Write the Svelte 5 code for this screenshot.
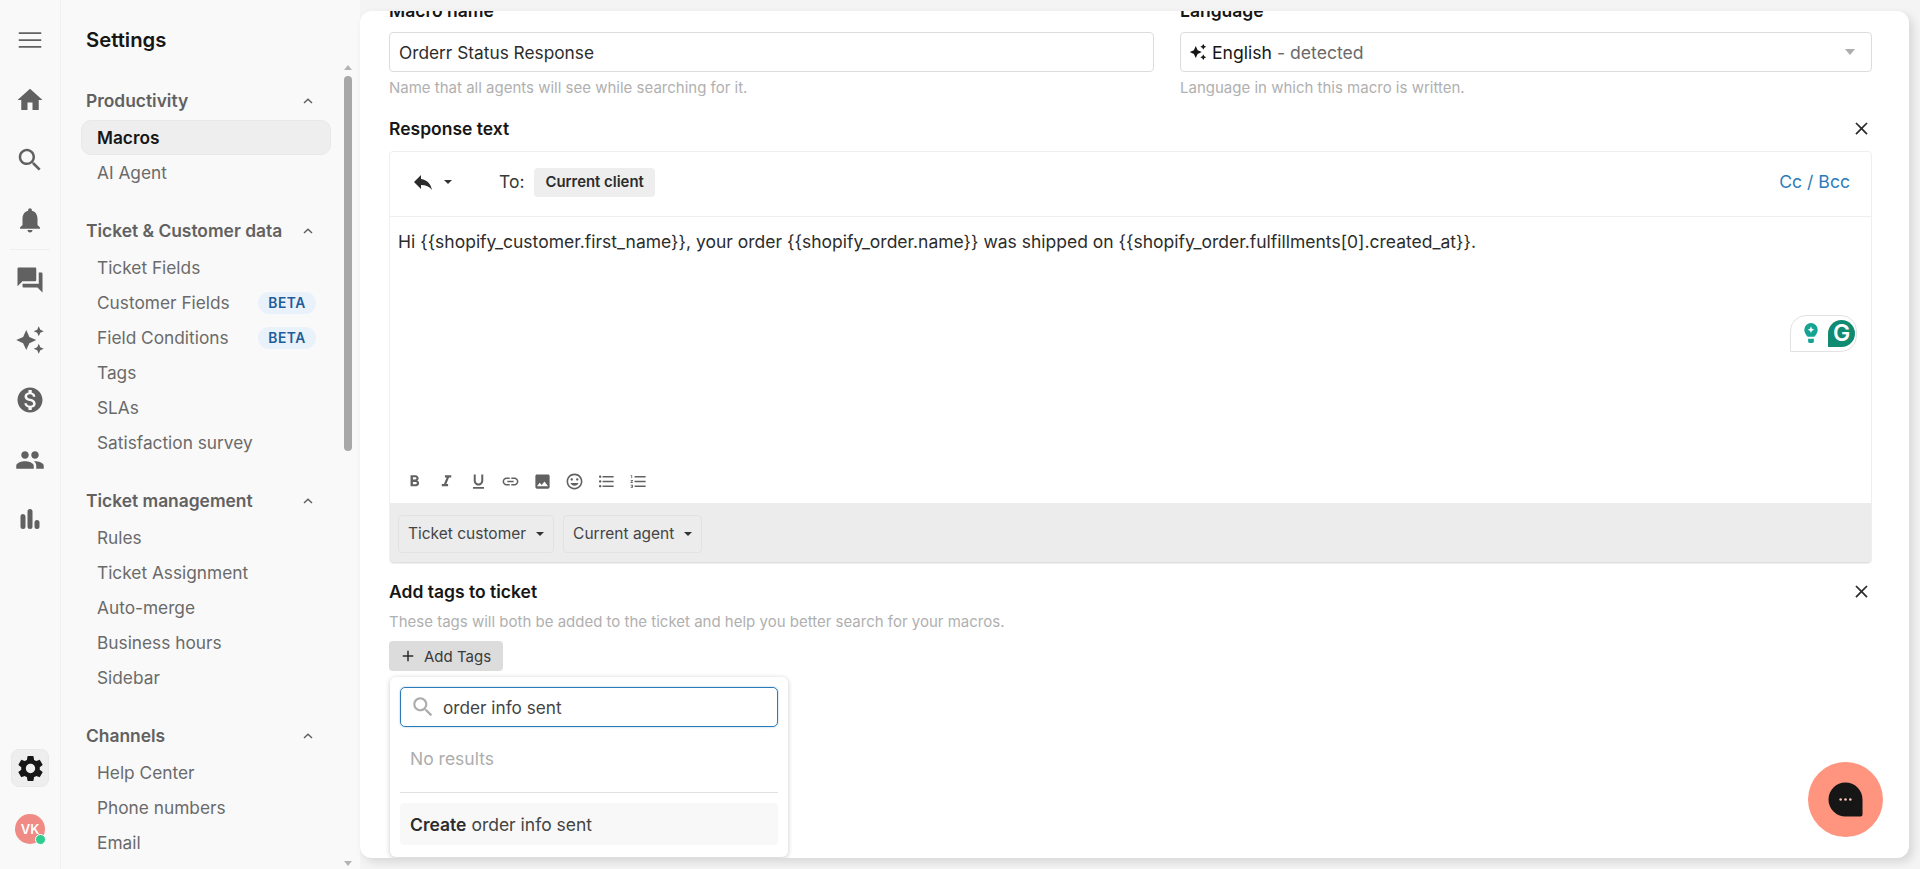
<script>
  const icons = {
    menu: 'M3 18.2h18v-1.4H3zm0-5.5h18v-1.4H3zM3 5.8v1.4h18V5.8z',
    home: 'M10 20v-6h4v6h5v-8h3L12 3 2 12h3v8z',
    search: 'M15.5 14h-.79l-.28-.27C15.41 12.59 16 11.11 16 9.5 16 5.91 13.09 3 9.5 3S3 5.91 3 9.5 5.91 16 9.5 16c1.61 0 3.09-.59 4.23-1.57l.27.28v.79l5 4.99L20.49 19l-4.99-5zm-6 0C7.01 14 5 11.99 5 9.5S7.01 5 9.5 5 14 7.01 14 9.5 11.99 14 9.5 14z',
    bell: 'M12 22c1.1 0 2-.9 2-2h-4c0 1.1.89 2 2 2zm6-6v-5c0-3.07-1.64-5.64-4.5-6.32V4c0-.83-.67-1.5-1.5-1.5s-1.5.67-1.5 1.5v.68C7.63 5.36 6 7.92 6 11v5l-2 2v1h16v-1l-2-2z',
    forum: 'M21 6h-2v9H6v2c0 .55.45 1 1 1h11l4 4V7c0-.55-.45-1-1-1zm-4 6V3c0-.55-.45-1-1-1H3c-.55 0-1 .45-1 1v14l4-4h10c.55 0 1-.45 1-1z',
    sparkle: 'M19 9l1.25-2.75L23 5l-2.75-1.25L19 1l-1.25 2.75L15 5l2.75 1.25L19 9zm-7.5.5L9 4 6.5 9.5 1 12l5.5 2.5L9 20l2.5-5.5L17 12l-5.5-2.5zM19 15l-1.25 2.75L15 19l2.75 1.25L19 23l1.25-2.75L23 19l-2.75-1.25L19 15z',
    money: 'M12 2C6.48 2 2 6.48 2 12s4.48 10 10 10 10-4.48 10-10S17.52 2 12 2zm1.41 16.09V20h-2.67v-1.93c-1.71-.36-3.16-1.46-3.27-3.4h1.96c.1 1.05.82 1.87 2.65 1.87 1.96 0 2.4-.98 2.4-1.59 0-.83-.44-1.61-2.67-2.14-2.48-.6-4.18-1.62-4.18-3.67 0-1.72 1.39-2.84 3.11-3.21V4h2.67v1.95c1.86.45 2.79 1.86 2.85 3.39H14.3c-.05-1.11-.64-1.87-2.22-1.87-1.5 0-2.4.68-2.4 1.64 0 .84.65 1.39 2.67 1.91s4.18 1.39 4.18 3.91c-.01 1.83-1.38 2.83-3.12 3.16z',
    people: 'M16 11c1.66 0 2.99-1.34 2.99-3S17.66 5 16 5c-1.66 0-3 1.34-3 3s1.34 3 3 3zm-8 0c1.66 0 2.99-1.34 2.99-3S9.66 5 8 5C6.34 5 5 6.34 5 8s1.34 3 3 3zm0 2c-2.33 0-7 1.17-7 3.5V19h14v-2.5c0-2.33-4.67-3.5-7-3.5zm8 0c-.29 0-.62.02-.97.05 1.16.84 1.97 1.97 1.97 3.45V19h6v-2.5c0-2.33-4.67-3.5-7-3.5z',
    chart: 'M4.400 9.200a2 2 0 0 1 4 0v8a2 2 0 0 1-4 0zM10 5.200a2 2 0 0 1 4 0v12a2 2 0 0 1-4 0zM15.600 14a2 2 0 0 1 4 0v3.200a2 2 0 0 1-4 0z',
    gear: 'M19.14 12.94c.04-.3.06-.61.06-.94 0-.32-.02-.64-.07-.94l2.03-1.58c.18-.14.23-.41.12-.61l-1.92-3.32c-.12-.22-.37-.29-.59-.22l-2.39.96c-.5-.38-1.03-.7-1.62-.94l-.36-2.54c-.04-.24-.24-.41-.48-.41h-3.84c-.24 0-.43.17-.47.41l-.36 2.54c-.59.24-1.13.57-1.62.94l-2.39-.96c-.22-.08-.47 0-.59.22L2.74 8.87c-.12.21-.08.47.12.61l2.03 1.58c-.05.3-.09.63-.09.94s.02.64.07.94l-2.03 1.58c-.18.14-.23.41-.12.61l1.92 3.32c.12.22.37.29.59.22l2.39-.96c.5.38 1.03.7 1.62.94l.36 2.54c.05.24.24.41.48.41h3.84c.24 0 .44-.17.47-.41l.36-2.54c.59-.24 1.13-.56 1.62-.94l2.39.96c.22.08.47 0 .59-.22l1.92-3.32c.12-.22.07-.47-.12-.61l-2.01-1.58zM12 15.6c-1.98 0-3.6-1.62-3.6-3.6s1.62-3.6 3.6-3.6 3.6 1.62 3.6 3.6-1.62 3.6-3.6 3.6z',
    reply: 'M10 9V5l-7 7 7 7v-4.1c5 0 8.5 1.6 11 5.1-1-5-4-10-11-11z',
    bold: 'M15.6 10.79c.97-.67 1.65-1.77 1.65-2.79 0-2.26-1.75-4-4-4H7v14h7.04c2.09 0 3.71-1.7 3.71-3.79 0-1.52-.86-2.82-2.15-3.42zM10 6.5h3c.83 0 1.5.67 1.5 1.5s-.67 1.5-1.5 1.5h-3v-3zm3.5 9H10v-3h3.5c.83 0 1.5.67 1.5 1.5s-.67 1.5-1.5 1.5z',
    italic: 'M10 4v3h2.21l-3.42 8H6v3h8v-3h-2.21l3.42-8H18V4z',
    underline: 'M12 17c3.31 0 6-2.69 6-6V3h-2.5v8c0 1.93-1.57 3.5-3.5 3.5S8.5 12.93 8.5 11V3H6v8c0 3.31 2.69 6 6 6zm-7 2v2h14v-2H5z',
    link: 'M3.9 12c0-1.71 1.39-3.1 3.1-3.1h4V7H7c-2.76 0-5 2.24-5 5s2.24 5 5 5h4v-1.9H7c-1.71 0-3.1-1.39-3.1-3.1zM8 13h8v-2H8v2zm9-6h-4v1.9h4c1.71 0 3.1 1.39 3.1 3.1s-1.39 3.1-3.1 3.1h-4V17h4c2.76 0 5-2.24 5-5s-2.24-5-5-5z',
    image: 'M21 19V5c0-1.1-.9-2-2-2H5c-1.1 0-2 .9-2 2v14c0 1.1.9 2 2 2h14c1.1 0 2-.9 2-2zM8.5 13.5l2.5 3.01L14.5 12l4.5 6H5l3.5-4.5z',
    emoji: 'M11.99 2C6.47 2 2 6.48 2 12s4.47 10 9.99 10C17.52 22 22 17.52 22 12S17.52 2 11.99 2zM12 20c-4.42 0-8-3.58-8-8s3.58-8 8-8 8 3.58 8 8-3.58 8-8 8zm3.5-9c.83 0 1.5-.67 1.5-1.5S16.33 8 15.5 8 14 8.67 14 9.5s.67 1.5 1.5 1.5zm-7 0c.83 0 1.5-.67 1.5-1.5S9.33 8 8.5 8 7 8.67 7 9.5 7.67 11 8.5 11zm3.5 6.5c2.33 0 4.31-1.46 5.11-3.5H6.89c.8 2.04 2.78 3.5 5.11 3.5z',
    bullets: 'M4 10.5c-.83 0-1.5.67-1.5 1.5s.67 1.5 1.5 1.5 1.5-.67 1.5-1.5-.67-1.5-1.5-1.5zm0-6c-.83 0-1.5.67-1.5 1.5S3.17 7.5 4 7.5 5.5 6.83 5.5 6 4.83 4.5 4 4.5zm0 12c-.83 0-1.5.68-1.5 1.5s.68 1.5 1.5 1.5 1.5-.68 1.5-1.5-.67-1.5-1.5-1.5zM7 19h14v-2H7v2zm0-6h14v-2H7v2zm0-8v2h14V5H7z',
    numbers: 'M2 17h2v.5H3v1h1v.5H2v1h3v-4H2v1zm1-9h1V4H2v1h1v3zm-1 3h1.8L2 13.1v.9h3v-1H3.2L5 10.9V10H2v1zm5-6v2h14V5H7zm0 14h14v-2H7v2zm0-6h14v-2H7v2z',
    close: 'M19 6.41 17.59 5 12 10.59 6.41 5 5 6.41 10.59 12 5 17.59 6.41 19 12 13.41 17.59 19 19 17.59 13.41 12z',
    plus: 'M19 13h-6v6h-2v-6H5v-2h6V5h2v6h6z'
  };

  const topNav = ['home', 'search', 'bell'];
  const midNav = ['forum', 'sparkle', 'money', 'people', 'chart'];
  const formatTools = ['bold', 'italic', 'underline', 'link', 'image', 'emoji', 'bullets', 'numbers'];

  const groups = [
    { title: 'Productivity', items: [{ name: 'Macros', active: true }, { name: 'AI Agent' }] },
    {
      title: 'Ticket & Customer data',
      items: [
        { name: 'Ticket Fields' },
        { name: 'Customer Fields', beta: true },
        { name: 'Field Conditions', beta: true },
        { name: 'Tags' },
        { name: 'SLAs' },
        { name: 'Satisfaction survey' }
      ]
    },
    {
      title: 'Ticket management',
      items: [
        { name: 'Rules' },
        { name: 'Ticket Assignment' },
        { name: 'Auto-merge' },
        { name: 'Business hours' },
        { name: 'Sidebar' }
      ]
    },
    { title: 'Channels', items: [{ name: 'Help Center' }, { name: 'Phone numbers' }, { name: 'Email' }] }
  ];
</script>

{#snippet icon(name, cls = '')}
  <svg class={cls} viewBox="0 0 24 24" aria-hidden="true"><path d={icons[name]} /></svg>
{/snippet}

<div class="app">
  <nav class="rail">
    <div class="rail-item first">{@render icon('menu', 'ri')}</div>
    {#each topNav as n}
      <div class="rail-item">{@render icon(n, 'ri')}</div>
    {/each}
    <div class="rail-sep"></div>
    {#each midNav as n}
      <div class="rail-item">{@render icon(n, 'ri')}</div>
    {/each}
    <div class="rail-bottom">
      <div class="gear-box">{@render icon('gear', 'gear')}</div>
      <div class="avatar">VK<span class="online"></span></div>
    </div>
  </nav>

  <aside class="settings">
    <h1>Settings</h1>
    <div class="groups">
      {#each groups as g}
        <section class="group">
          <div class="group-head">
            <span>{g.title}</span>
            <svg class="chev" viewBox="0 0 12 8"><path d="M2 6 6 2.2 10 6" /></svg>
          </div>
          {#each g.items as item}
            <div class="item" class:active={item.active}>
              <span>{item.name}</span>
              {#if item.beta}<span class="beta">BETA</span>{/if}
            </div>
          {/each}
        </section>
      {/each}
    </div>
    <div class="scrollbar">
      <span class="arrow up"></span>
      <span class="track"><span class="thumb"></span></span>
      <span class="arrow down"></span>
    </div>
  </aside>

  <main class="stage">
    <div class="card">
      <div class="fields">
        <div class="field name-field">
          <div class="label">Macro name</div>
          <div class="input">Orderr Status Response</div>
          <div class="hint">Name that all agents will see while searching for it.</div>
        </div>
        <div class="field">
          <div class="label">Language</div>
          <div class="input lang">
            {@render icon('sparkle', 'lang-spark')}
            <span class="lang-name">English</span>
            <span class="lang-detected">- detected</span>
            <span class="caret grey"></span>
          </div>
          <div class="hint">Language in which this macro is written.</div>
        </div>
      </div>

      <div class="section-head">
        <span class="label">Response text</span>
        {@render icon('close', 'x')}
      </div>
      <div class="editor">
        <div class="editor-head">
          {@render icon('reply', 'reply')}
          <span class="caret dark small"></span>
          <span class="to">To:</span>
          <span class="chip">Current client</span>
          <span class="ccbcc">Cc / Bcc</span>
        </div>
        <div class="editor-body">
          <p>Hi &#123;&#123;shopify_customer.first_name&#125;&#125;, your order &#123;&#123;shopify_order.name&#125;&#125; was shipped on &#123;&#123;shopify_order.fulfillments[0].created_at&#125;&#125;.</p>
          <div class="grammarly">
            <svg class="bulb" viewBox="0 0 16 24"><path d="M8 1a7 7 0 0 0-7 7c0 3 1.6 5 3.5 7.5h7C13.400 13 15 11 15 8a7 7 0 0 0-7-7z" /><path d="M5 17.500h6V20a2 2 0 0 1-2 2H7a2 2 0 0 1-2-2z" /><path class="bulb-star" d="M8 4.500 9 7l2.500 1L9 9l-1 2.500L7 9 4.500 8 7 7z" /></svg>
            <span class="g-badge">G</span>
          </div>
        </div>
        <div class="format-bar">
          {#each formatTools as t}
            {@render icon(t, 'fmt')}
          {/each}
        </div>
        <div class="vars">
          <div class="var-btn">Ticket customer <span class="caret dark"></span></div>
          <div class="var-btn">Current agent <span class="caret dark"></span></div>
        </div>
      </div>

      <div class="section-head tags-head">
        <span class="label">Add tags to ticket</span>
        {@render icon('close', 'x')}
      </div>
      <div class="hint tags-hint">These tags will both be added to the ticket and help you better search for your macros.</div>
      <div class="tags-wrap">
        <div class="add-tags">{@render icon('plus', 'plus')}Add Tags</div>
        <div class="popover">
          <div class="tag-search">
            {@render icon('search', 'tag-search-ico')}
            <span>order info sent</span>
          </div>
          <div class="no-results">No results</div>
          <div class="divider"></div>
          <div class="create"><b>Create</b> order info sent</div>
        </div>
      </div>

      <div class="chat-fab">
        <svg viewBox="0 0 36 36"><path d="M18 .5a17.500 17.500 0 1 0 0 35h15.500a2 2 0 0 0 2-2V18A17.500 17.500 0 0 0 18 .5z" /><circle class="dot" cx="13" cy="18" r="1.300" /><circle class="dot" cx="18" cy="18" r="1.300" /><circle class="dot" cx="23" cy="18" r="1.300" /></svg>
      </div>
    </div>
  </main>
</div>

<style>
  :global(body) {
    margin: 0;
    background: #f9f9f9;
    font-family: Inter, "Liberation Sans", sans-serif;
    color: #161616;
  }

  .app {
    display: grid;
    grid-template-columns: 61px 299px 1fr;
    height: 869px;
    overflow: hidden;
  }

  svg {
    fill: currentColor;
    display: block;
  }

  .rail {
    display: flex;
    flex-direction: column;
    align-items: center;
    border-right: 1px solid #f0f0f0;
    color: #616161;
    padding-top: 10px;
  }
  .rail-item {
    height: 60px;
    width: 100%;
    display: flex;
    align-items: center;
    justify-content: center;
    flex: none;
  }
  .ri {
    width: 30px;
    height: 30px;
  }
  .rail-sep {
    width: 40px;
    height: 1px;
    background: #f0f0f0;
    margin: -1px 0 0;
    flex: none;
  }
  .rail-bottom {
    margin-top: auto;
    display: flex;
    flex-direction: column;
    align-items: center;
    gap: 27px;
    padding-bottom: 25px;
  }
  .gear-box {
    width: 38px;
    height: 38px;
    border-radius: 8px;
    background: #eeeeee;
    border: 1px solid #e8e8e8;
    box-sizing: border-box;
    display: flex;
    align-items: center;
    justify-content: center;
    color: #161616;
  }
  .gear {
    width: 31px;
    height: 31px;
  }
  .avatar {
    position: relative;
    width: 30px;
    height: 30px;
    border-radius: 50%;
    background: #f08a84;
    color: #fff;
    font-size: 13px;
    font-weight: 600;
    display: flex;
    align-items: center;
    justify-content: center;
  }
  .online {
    position: absolute;
    right: -1px;
    bottom: -1px;
    width: 9px;
    height: 9px;
    border-radius: 50%;
    background: #2ecc8f;
    border: 1px solid #fff;
  }

  .settings {
    position: relative;
    padding: 0 29px 0 20px;
    overflow: hidden;
  }
  h1 {
    font-size: 20.3px;
    font-weight: 600;
    margin: 26px 0 0 5px;
    line-height: 28px;
    color: #161616;
  }
  .groups {
    margin-top: 29px;
  }
  .group {
    margin-bottom: 23px;
  }
  .group-head {
    display: flex;
    justify-content: space-between;
    align-items: center;
    height: 35px;
    padding: 0 17px 0 5px;
    font-size: 17.4px;
    font-weight: 600;
    color: #616161;
    margin-bottom: 2px;
  }
  .chev {
    width: 12px;
    height: 8px;
    fill: none;
    stroke: #616161;
    stroke-width: 1.5;
  }
  .item {
    height: 35px;
    box-sizing: border-box;
    display: flex;
    align-items: center;
    justify-content: space-between;
    padding: 0 15px 0 16px;
    font-size: 17.3px;
    color: #6a6a6a;
    border-radius: 10px;
  }
  .item.active {
    background: #eeeeee;
    border: 1px solid #e8e8e8;
    padding-left: 15px;
    color: #161616;
    font-weight: 600;
  }
  .beta {
    background: #e9f2fb;
    color: #1f5c99;
    font-size: 13.8px;
    font-weight: 600;
    letter-spacing: 0.6px;
    padding: 2px 10px;
    border-radius: 11px;
    line-height: 18px;
  }
  .scrollbar {
    position: absolute;
    right: 8px;
    top: 62px;
    bottom: 0;
    width: 8px;
    display: flex;
    flex-direction: column;
    align-items: center;
  }
  .track {
    flex: 1;
    width: 100%;
  }
  .thumb {
    display: block;
    margin-top: 3px;
    height: 375px;
    border-radius: 4px;
    background: #a8a8a8;
  }
  .arrow {
    width: 0;
    height: 0;
    border-left: 4px solid transparent;
    border-right: 4px solid transparent;
    flex: none;
    margin: 3px 0;
  }
  .arrow.up {
    border-bottom: 5px solid #b4b4b4;
  }
  .arrow.down {
    border-top: 5px solid #b4b4b4;
  }

  .stage {
    padding: 11px 11px 11px 0;
    background: #f4f4f4;
    min-width: 0;
  }
  .card {
    position: relative;
    height: 847px;
    background: #fff;
    border-radius: 12px;
    padding: 0 37px 0 29px;
    box-shadow: 4px 4px 10px rgba(0, 0, 0, 0.12);
    overflow: hidden;
    box-sizing: border-box;
  }

  .fields {
    display: grid;
    grid-template-columns: 765px 692px;
    gap: 26px;
    margin-top: -11px;
  }
  .label {
    font-size: 17.5px;
    font-weight: 600;
    line-height: 21px;
    color: #161616;
  }
  .input {
    margin-top: 11px;
    height: 40px;
    box-sizing: border-box;
    border: 1px solid #dcdcdc;
    border-radius: 4px;
    padding: 0 9px;
    font-size: 17.3px;
    color: #2c2c2c;
    display: flex;
    align-items: center;
  }
  .lang {
    gap: 5px;
    font-size: 17.6px;
  }
  .lang-spark {
    width: 18px;
    height: 18px;
    color: #161616;
    margin-left: -1px;
  }
  .lang-name {
    color: #161616;
  }
  .lang-detected {
    color: #6a6a6a;
  }
  .caret {
    display: inline-block;
    width: 0;
    height: 0;
    border-left: 5px solid transparent;
    border-right: 5px solid transparent;
    border-top: 6px solid #444;
  }
  .caret.grey {
    margin-left: auto;
    margin-right: 7px;
    border-top-color: #adadad;
  }
  .caret.dark {
    border-left-width: 4.5px;
    border-right-width: 4.5px;
    border-top-width: 4.5px;
    border-top-color: #333;
  }
  .caret.small {
    border-left-width: 4px;
    border-right-width: 4px;
    border-top-width: 4px;
  }
  .hint {
    font-size: 15px;
    color: #b0b0b0;
    margin-top: 7px;
    line-height: 18px;
  }

  .section-head {
    display: flex;
    justify-content: space-between;
    align-items: center;
    margin-top: 18px;
    height: 26px;
  }
  .x {
    width: 21px;
    height: 21px;
    color: #2c2c2c;
  }

  .editor {
    margin-top: 10px;
    border: 1px solid #efefef;
    border-radius: 4px;
  }
  .editor-head {
    height: 65px;
    box-sizing: border-box;
    display: flex;
    align-items: center;
    padding: 0 21px 4px 21px;
    border-bottom: 1px solid #efefef;
  }
  .reply {
    width: 24px;
    height: 24px;
    color: #2c2c2c;
  }
  .editor-head .caret {
    margin-left: 9px;
  }
  .to {
    margin-left: 47px;
    font-size: 17.5px;
    color: #3a3a3a;
    position: relative;
    top: -1px;
  }
  .chip {
    margin-left: 10px;
    background: #eeeeee;
    border-radius: 4px;
    padding: 0 11px;
    height: 29px;
    line-height: 29px;
    font-size: 14.9px;
    font-weight: 600;
    color: #2c2c2c;
  }
  .ccbcc {
    margin-left: auto;
    color: #2b7bb9;
    font-size: 17.6px;
    position: relative;
    top: -1px;
  }
  .editor-body {
    position: relative;
    height: 240px;
    padding: 15px 8px;
    box-sizing: border-box;
  }
  .editor-body p {
    margin: 0;
    font-size: 17.5px;
    line-height: 20px;
    color: #2c2c2c;
  }
  .grammarly {
    position: absolute;
    right: 14px;
    top: 98px;
    width: 67px;
    height: 37px;
    box-sizing: border-box;
    background: #fff;
    border: 1px solid #e2e2e2;
    border-radius: 16px 16px 16px 0;
    display: flex;
    align-items: center;
    padding-left: 12px;
    gap: 9px;
  }
  .bulb {
    width: 16px;
    height: 23px;
    fill: #16a394;
  }
  .bulb-star {
    fill: #fff;
  }
  .g-badge {
    width: 27px;
    height: 27px;
    border-radius: 50% 50% 50% 0;
    background: #118a72;
    color: #fff;
    font-size: 23px;
    font-weight: 600;
    text-align: center;
    line-height: 27px;
  }
  .format-bar {
    height: 43px;
    box-sizing: border-box;
    display: flex;
    align-items: center;
    gap: 13px;
    padding: 0 10px 0 15px;
    margin-top: 3px;
    color: #616161;
  }
  .fmt {
    width: 19px;
    height: 19px;
  }
  .vars {
    background: #ececec;
    height: 60px;
    box-sizing: border-box;
    display: flex;
    align-items: center;
    gap: 9px;
    padding: 2px 8px 0;
    border-radius: 0 0 4px 4px;
    border-bottom: 1px solid #e0e0e0;
  }
  .var-btn {
    height: 38px;
    box-sizing: border-box;
    border: 1px solid #e2e2e2;
    border-radius: 4px;
    padding: 0 9px;
    display: flex;
    align-items: center;
    gap: 10px;
    font-size: 15.5px;
    color: #444;
  }

  .tags-head {
    margin-top: 14.5px;
  }
  .tags-hint {
    margin-top: 8.5px;
  }
  .tags-wrap {
    position: relative;
    margin-top: 10px;
  }
  .add-tags {
    display: inline-flex;
    align-items: center;
    gap: 7px;
    height: 30px;
    padding: 0 10px;
    box-sizing: border-box;
    width: 114px;
    background: #dcdcdc;
    border-radius: 4px;
    font-size: 15px;
    color: #3a3a3a;
  }
  .plus {
    width: 18px;
    height: 18px;
    color: #2c2c2c;
  }
  .popover {
    position: absolute;
    left: 1px;
    top: 36px;
    width: 398px;
    height: 180px;
    box-sizing: border-box;
    background: #fff;
    border-radius: 6px;
    padding: 10px 10px;
    box-shadow: 0 1px 5px rgba(0, 0, 0, 0.22);
  }
  .tag-search {
    height: 40px;
    box-sizing: border-box;
    border: 1px solid #2b7bb9;
    border-radius: 5px;
    box-shadow: 0 0 2px rgba(43, 123, 185, 0.5);
    display: flex;
    align-items: center;
    gap: 7px;
    padding: 0 9px;
    font-size: 17.2px;
    color: #444;
  }
  .tag-search-ico {
    width: 26px;
    height: 26px;
    color: #adadad;
  }
  .no-results {
    margin-top: 22px;
    padding-left: 10px;
    font-size: 17.5px;
    line-height: 20px;
    color: #adadad;
  }
  .divider {
    margin-top: 23px;
    height: 1px;
    background: #e0e0e0;
  }
  .create {
    margin-top: 10px;
    height: 42px;
    padding-bottom: 1px;
    background: #f8f8f8;
    border-radius: 4px;
    padding: 0 10px;
    display: flex;
    align-items: center;
    gap: 5px;
    font-size: 17.5px;
    color: #444;
  }
  .create b {
    font-weight: 600;
    color: #2c2c2c;
  }
  .chat-fab {
    position: absolute;
    right: 26px;
    bottom: 21px;
    width: 75px;
    height: 75px;
    border-radius: 50%;
    background: #ff947f;
    display: flex;
    align-items: center;
    justify-content: center;
  }
  .chat-fab svg {
    width: 35px;
    height: 35px;
    fill: #161616;
  }
  .chat-fab .dot {
    fill: #ffc9bd;
  }
</style>
